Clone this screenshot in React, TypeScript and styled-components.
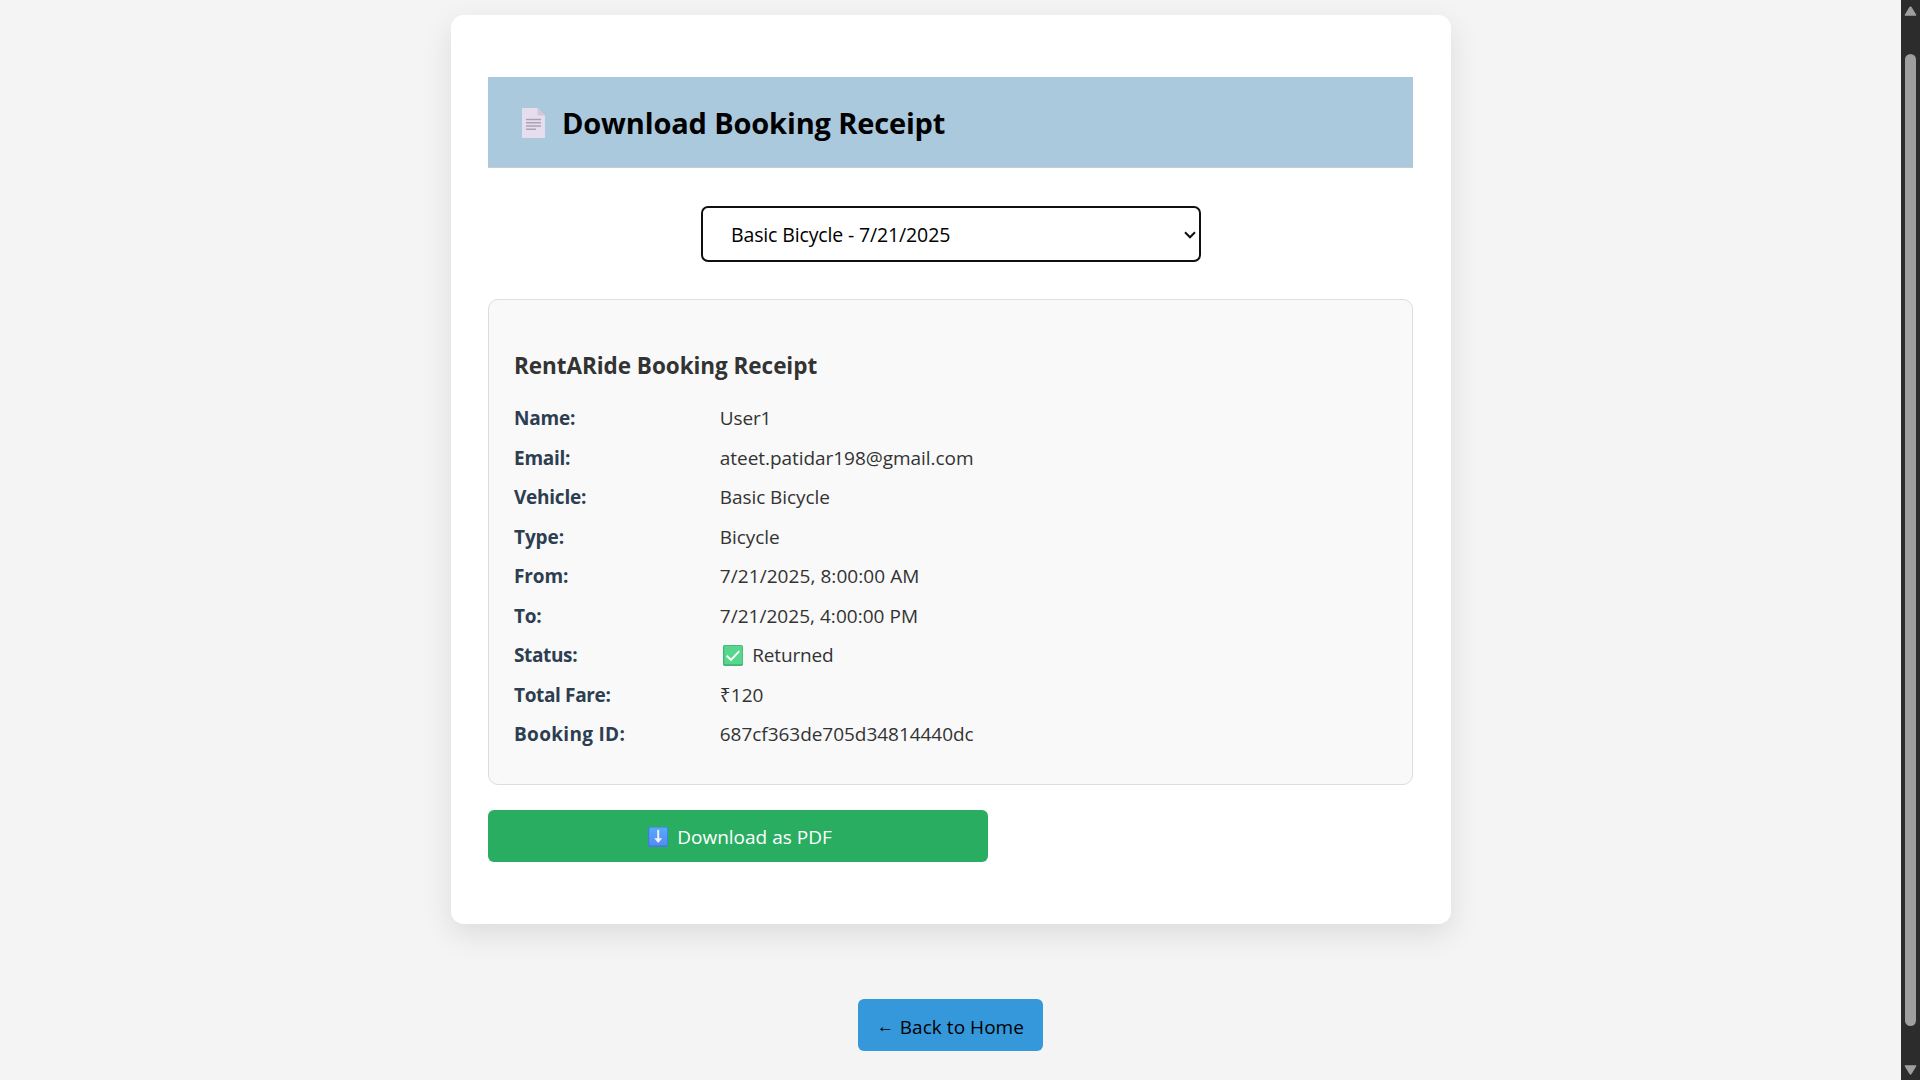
import React from 'react';
import styled, { createGlobalStyle } from 'styled-components';

const GlobalStyle = createGlobalStyle`
  * { box-sizing: border-box; }
  body {
    margin: 0;
    overflow: hidden;
    background: #f4f4f4;
    font-family: 'Open Sans', 'Noto Sans', sans-serif;
    color: #333;
  }
`;

const Shell = styled.div`
  display: flex;
  width: 100%;
  height: 1080px;
`;

const Page = styled.main`
  flex: 1;
  display: flex;
  flex-direction: column;
  align-items: center;
  padding-top: 15px;
`;

const Card = styled.section`
  display: flex;
  flex-direction: column;
  flex-shrink: 0;
  width: 1000px;
  height: 909px;
  padding: 62px 37.5px;
  background: #fff;
  border-radius: 12.5px;
  box-shadow: 0 10px 30px rgba(0, 0, 0, 0.1);
`;

const Header = styled.header`
  display: flex;
  align-items: center;
  height: 91px;
  padding: 1px 0 0 32.5px;
  background: #abc9dd;
  border-bottom: 1px solid #c8cbcd;

  svg {
    display: block;
    width: 25px;
    height: 32px;
  }
`;

const Title = styled.h1`
  margin: 0 0 0 16.5px;
  font-size: 29px;
  font-weight: 700;
  line-height: 40px;
  letter-spacing: -0.15px;
  color: #000;
`;

const Select = styled.button`
  display: flex;
  align-items: center;
  justify-content: space-between;
  align-self: center;
  width: 500px;
  height: 56px;
  margin: 38px 0 37px;
  padding: 2px 3px 0 28.5px;
  background: #fff;
  border: 2px solid #101010;
  border-radius: 7px;
  font: 400 19.5px/28px 'Open Sans', 'Noto Sans', sans-serif;
  letter-spacing: -0.14px;
  color: #000;

  svg {
    display: block;
    width: 12px;
    height: 8px;
  }
`;

const Receipt = styled.article`
  height: 486px;
  padding: 46px 25px 0;
  background: #f9f9f9;
  border: 1px solid #ddd;
  border-radius: 10px;
`;

const ReceiptTitle = styled.h2`
  margin: 0 0 12.3px;
  font-size: 22.5px;
  font-weight: 700;
  line-height: 40px;
  letter-spacing: -0.05px;
`;

const Details = styled.dl`
  margin: 0;
`;

const Row = styled.div`
  display: grid;
  grid-template-columns: 205.8px 1fr;
  align-items: center;
  height: 39.55px;
  font-size: 19px;
  line-height: 28px;
`;

const Label = styled.dt<{ $tracking: number }>`
  font-weight: 700;
  letter-spacing: ${(p) => p.$tracking}px;
  color: #2c3e50;
`;

const Value = styled.dd<{ $tracking: number }>`
  display: flex;
  align-items: center;
  margin: 0;
  letter-spacing: ${(p) => p.$tracking}px;

  svg {
    display: block;
    width: 20px;
    height: 21px;
    margin: 0 9.5px 0 3px;
  }
`;

const DownloadButton = styled.button`
  display: flex;
  align-items: center;
  justify-content: center;
  width: 500px;
  height: 52px;
  margin-top: 25px;
  padding: 2px 0 0 4px;
  background: #29ae61;
  border: 0;
  border-radius: 6px;
  font: 400 19px/28px 'Open Sans', 'Noto Sans', sans-serif;
  color: #fff;

  svg {
    display: block;
    width: 20px;
    height: 20px;
    margin-right: 9px;
  }
`;

const BackButton = styled.button`
  display: flex;
  align-items: center;
  flex-shrink: 0;
  width: 185px;
  height: 52px;
  margin-top: 75px;
  padding: 3px 0 0 20px;
  background: #3598db;
  border: 0;
  border-radius: 6px;
  font: 400 19px/28px 'Open Sans', 'Noto Sans', sans-serif;
  letter-spacing: 0.04px;
  color: #000;
`;

const Arrow = styled.span`
  width: 21.8px;
  text-align: left;
  font: 400 17px/28px 'Liberation Sans', sans-serif;
  text-indent: -1px;
`;

const Scrollbar = styled.aside`
  display: flex;
  flex-direction: column;
  align-items: center;
  width: 19px;
  height: 1080px;
  padding: 6px 0 5px;
  background: #2c2c2c;

  svg {
    display: block;
    width: 13px;
    height: 10px;
  }
`;

const Thumb = styled.div`
  width: 11px;
  height: 972px;
  margin: 38px 0 39px;
  background: #9f9f9f;
  border-radius: 5.5px;
`;

const DocumentIcon = () => (
  <svg viewBox="0 0 25 32">
    <path d="M2 1H16.5L24 8.5V31H1V2Q1 1 2 1Z" fill="#e6deef" />
    <path d="M16.5 1L24 8.5H17.5Q16.5 8.5 16.5 7.5Z" fill="#cfc8d6" />
    <path d="M5 12.5H20M5 15.7H20M5 19H20M5 22.3H15" stroke="#aaa2b1" strokeWidth="1.5" />
  </svg>
);

const CheckIcon = () => (
  <svg viewBox="0 0 20 21">
    <rect width="20" height="21" rx="1.8" fill="#43b178" />
    <rect x="1.2" y="0.7" width="18.2" height="18.6" rx="1.2" fill="#57d68d" />
    <path d="M3.7 10.8L8 15L16.3 6.2" fill="none" stroke="#fff" strokeWidth="1.9" />
  </svg>
);

const DownIcon = () => (
  <svg viewBox="0 0 20 20">
    <defs>
      <linearGradient id="down" x1="0" y1="0" x2="0" y2="1">
        <stop offset="0" stopColor="#58aafb" />
        <stop offset="1" stopColor="#508df0" />
      </linearGradient>
    </defs>
    <rect width="20" height="20" rx="1.8" fill="#4478da" />
    <rect x="1.2" y="0.5" width="18" height="18" rx="1.2" fill="url(#down)" />
    <path d="M10.2 3.8V13" stroke="#f6f0ff" strokeWidth="2" strokeLinecap="round" />
    <path d="M6.2 11.2H14.2L10.2 16Z" fill="#f6f0ff" />
  </svg>
);

const ChevronIcon = () => (
  <svg viewBox="0 0 12 8">
    <path d="M1 1.3L6 6.3L11 1.3" fill="none" stroke="#101010" strokeWidth="2" />
  </svg>
);

const ScrollArrow = ({ down = false }: { down?: boolean }) => (
  <svg viewBox="0 0 13 10">
    <path
      d={down ? 'M1 .8H12L7.2 8.8Q6.5 9.8 5.8 8.8Z' : 'M1 9.2H12L7.2 1.2Q6.5 .2 5.8 1.2Z'}
      fill="#9f9f9f"
      stroke="#9f9f9f"
      strokeLinejoin="round"
    />
  </svg>
);

type Detail = {
  label: string;
  value: string;
  labelTracking: number;
  valueTracking: number;
  checked?: boolean;
};

const details: Detail[] = [
  { label: 'Name:', value: 'User1', labelTracking: -0.2, valueTracking: -0.15 },
  { label: 'Email:', value: 'ateet.patidar198@gmail.com', labelTracking: -0.25, valueTracking: -0.05 },
  { label: 'Vehicle:', value: 'Basic Bicycle', labelTracking: -0.25, valueTracking: -0.08 },
  { label: 'Type:', value: 'Bicycle', labelTracking: -0.1, valueTracking: -0.05 },
  { label: 'From:', value: '7/21/2025, 8:00:00 AM', labelTracking: -0.1, valueTracking: 0.07 },
  { label: 'To:', value: '7/21/2025, 4:00:00 PM', labelTracking: -0.2, valueTracking: 0.03 },
  { label: 'Status:', value: 'Returned', labelTracking: -0.36, valueTracking: -0.17, checked: true },
  { label: 'Total Fare:', value: '₹120', labelTracking: -0.36, valueTracking: 0.06 },
  { label: 'Booking ID:', value: '687cf363de705d34814440dc', labelTracking: 0.31, valueTracking: -0.04 },
];

export default function App() {
  return (
    <>
      <GlobalStyle />
      <Shell>
        <Page>
          <Card>
            <Header>
              <DocumentIcon />
              <Title>Download Booking Receipt</Title>
            </Header>
            <Select>
              Basic Bicycle - 7/21/2025
              <ChevronIcon />
            </Select>
            <Receipt>
              <ReceiptTitle>RentARide Booking Receipt</ReceiptTitle>
              <Details>
                {details.map((d) => (
                  <Row key={d.label}>
                    <Label $tracking={d.labelTracking}>{d.label}</Label>
                    <Value $tracking={d.valueTracking}>
                      {d.checked && <CheckIcon />}
                      {d.value}
                    </Value>
                  </Row>
                ))}
              </Details>
            </Receipt>
            <DownloadButton>
              <DownIcon />
              Download as PDF
            </DownloadButton>
          </Card>
          <BackButton>
            <Arrow>←</Arrow>
            Back to Home
          </BackButton>
        </Page>
        <Scrollbar>
          <ScrollArrow />
          <Thumb />
          <ScrollArrow down />
        </Scrollbar>
      </Shell>
    </>
  );
}
